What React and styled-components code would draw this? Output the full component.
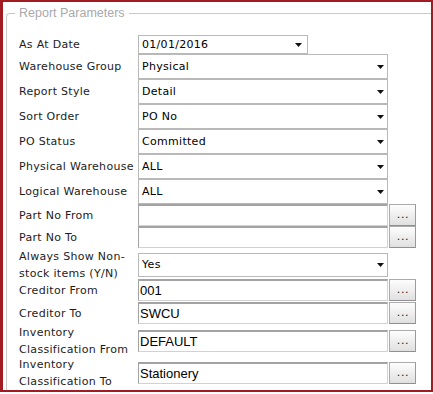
import React from "react";
import styled, { createGlobalStyle } from "styled-components";

const Global = createGlobalStyle`
  html, body { margin: 0; padding: 0; background: #ffffff; }
  #root { width: 433px; }
`;

const Window = styled.div`
  box-sizing: border-box;
  width: 433px;
  height: 392px;
  border: 2px solid #a01c22;
  border-left-width: 3px;
  background: #ffffff;
  overflow: hidden;
`;

const Fieldset = styled.fieldset`
  margin: 3px 0 0 3px;
  padding: 14px 0 24px 12px;
  border: 1px solid #c9c9c9;
  border-right: none;
  border-top-left-radius: 4px;
  min-width: 0;
`;

const Legend = styled.legend`
  margin-left: -4px;
  padding: 0 4px;
  font: 12.5px/16px "Liberation Sans", Arial, sans-serif;
  color: #a9a9a9;
`;

const Row = styled.div`
  display: grid;
  grid-template-columns: 119px auto;
  align-items: center;
  height: ${(p) => p.$h}px;
`;

const Label = styled.label`
  font: 11px/17px "DejaVu Sans", Verdana, sans-serif;
  letter-spacing: 0.3px;
  color: #1c1c1c;
`;

const Control = styled.div`
  display: flex;
  align-items: center;
`;

const SelectBox = styled.div`
  box-sizing: border-box;
  display: flex;
  align-items: center;
  justify-content: space-between;
  width: ${(p) => p.$w}px;
  height: ${(p) => p.$h}px;
  padding: 0 ${(p) => p.$pr}px 0 3px;
  border: 1px solid #b9b9b9;
  background: #ffffff;
  font: 11px/16px "DejaVu Sans", Verdana, sans-serif;
  letter-spacing: 0.3px;
  color: #000000;
`;

const TextInput = styled.input`
  box-sizing: border-box;
  width: 250px;
  height: 22px;
  margin: 0;
  padding: 0 1px;
  border-style: solid;
  border-width: 2px 1px 1px 1px;
  border-color: #a3a3a3 #d2d2d2 #d2d2d2 #a3a3a3;
  border-radius: 0;
  background: #ffffff;
  font: 13px "Liberation Sans", Arial, sans-serif;
  color: #000000;
  outline: none;
`;

const DotsButton = styled.button`
  box-sizing: border-box;
  display: flex;
  align-items: flex-end;
  justify-content: center;
  width: 27px;
  height: 22px;
  margin: 0 0 0 1px;
  padding: 0 0 5px 1px;
  border: 1px solid #ababab;
  border-bottom-color: #8f8f8f;
  border-right-color: #9a9a9a;
  border-radius: 0;
  background: linear-gradient(#fdfdfd, #efefef 50%, #e0e0e0);
  font: 11px/11px "DejaVu Sans", Verdana, sans-serif;
  letter-spacing: 0.6px;
  color: #222222;
`;

const Arrow = () => (
  <svg width="7" height="4" viewBox="0 0 7 4" aria-hidden="true">
    <polygon points="0,0 7,0 3.5,4" fill="#111111" />
  </svg>
);

const Select = ({ value, w = 250, h = 25, pr = 3 }) => (
  <SelectBox $w={w} $h={h} $pr={pr}>
    <span>{value}</span>
    <Arrow />
  </SelectBox>
);

const Lookup = ({ value = "" }) => (
  <Control>
    <TextInput readOnly defaultValue={value} />
    <DotsButton type="button">...</DotsButton>
  </Control>
);

export default function App() {
  return (
    <>
      <Global />
      <Window>
        <Fieldset>
          <Legend>Report Parameters</Legend>
          <Row $h={19}>
            <Label>As At Date</Label>
            <Control>
              <Select value="01/01/2016" w={170} h={19} pr={5} />
            </Control>
          </Row>
          <Row $h={25}>
            <Label>Warehouse Group</Label>
            <Control><Select value="Physical" /></Control>
          </Row>
          <Row $h={25}>
            <Label>Report Style</Label>
            <Control><Select value="Detail" /></Control>
          </Row>
          <Row $h={25}>
            <Label>Sort Order</Label>
            <Control><Select value="PO No" /></Control>
          </Row>
          <Row $h={25}>
            <Label>PO Status</Label>
            <Control><Select value="Committed" /></Control>
          </Row>
          <Row $h={25}>
            <Label>Physical Warehouse</Label>
            <Control><Select value="ALL" /></Control>
          </Row>
          <Row $h={25}>
            <Label>Logical Warehouse</Label>
            <Control><Select value="ALL" /></Control>
          </Row>
          <Row $h={22}>
            <Label>Part No From</Label>
            <Lookup />
          </Row>
          <Row $h={22}>
            <Label>Part No To</Label>
            <Lookup />
          </Row>
          <Row $h={30}>
            <Label>Always Show Non-stock items (Y/N)</Label>
            <Control><Select value="Yes" h={24} /></Control>
          </Row>
          <Row $h={24}>
            <Label>Creditor From</Label>
            <Lookup value="001" />
          </Row>
          <Row $h={22}>
            <Label>Creditor To</Label>
            <Lookup value="SWCU" />
          </Row>
          <Row $h={32}>
            <Label>Inventory Classification From</Label>
            <Lookup value="DEFAULT" />
          </Row>
          <Row $h={32}>
            <Label>Inventory Classification To</Label>
            <Lookup value="Stationery" />
          </Row>
        </Fieldset>
      </Window>
    </>
  );
}
